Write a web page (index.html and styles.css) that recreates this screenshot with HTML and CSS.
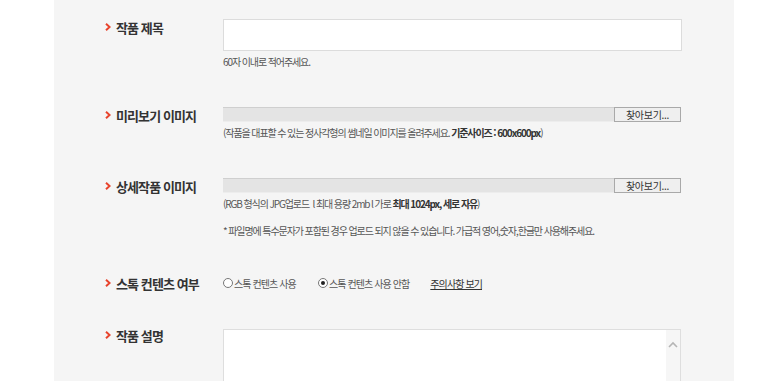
FILE: index.html
```html
<!DOCTYPE html>
<html lang="ko">
<head>
<meta charset="utf-8">
<link rel="stylesheet" href="styles.css">
</head>
<body>
<div class="panel">
  <div class="row r1">
    <div class="label"><svg class="chev" width="6" height="8" viewBox="0 0 6 8"><polyline points="1,0.8 4.6,4 1,7.2" fill="none" stroke="#e8432c" stroke-width="2"/></svg><span>작품 제목</span></div>
    <div class="field">
      <div class="textbox"></div>
      <p class="hint h-first">60자 이내로 적어주세요.</p>
    </div>
  </div>
  <div class="row r2">
    <div class="label"><svg class="chev" width="6" height="8" viewBox="0 0 6 8"><polyline points="1,0.8 4.6,4 1,7.2" fill="none" stroke="#e8432c" stroke-width="2"/></svg><span>미리보기 이미지</span></div>
    <div class="field">
      <div class="file"><div class="file-path"></div><div class="file-btn">찾아보기...</div></div>
      <p class="hint">(작품을 대표할 수 있는 정사각형의 썸네일 이미지를 올려주세요. <b>기준사이즈 : 600x600px</b>)</p>
    </div>
  </div>
  <div class="row r3">
    <div class="label"><svg class="chev" width="6" height="8" viewBox="0 0 6 8"><polyline points="1,0.8 4.6,4 1,7.2" fill="none" stroke="#e8432c" stroke-width="2"/></svg><span>상세작품 이미지</span></div>
    <div class="field">
      <div class="file"><div class="file-path"></div><div class="file-btn">찾아보기...</div></div>
      <p class="hint">(RGB 형식의 JPG업로드 &nbsp;l 최대 용량 2mb l 가로 <b>최대 1024px, 세로 자유</b>)</p>
      <p class="hint h-note">* 파일명에 특수문자가 포함된 경우 업로드 되지 않을 수 있습니다. 가급적 영어,숫자,한글만 사용해주세요.</p>
    </div>
  </div>
  <div class="row r4">
    <div class="label"><svg class="chev" width="6" height="8" viewBox="0 0 6 8"><polyline points="1,0.8 4.6,4 1,7.2" fill="none" stroke="#e8432c" stroke-width="2"/></svg><span>스톡 컨텐츠 여부</span></div>
    <div class="field radios">
      <label class="radio"><span class="dot"></span>스톡 컨텐츠 사용</label>
      <label class="radio on"><span class="dot"></span>스톡 컨텐츠 사용 안함</label>
      <a class="link">주의사항 보기</a>
    </div>
  </div>
  <div class="row r5">
    <div class="label"><svg class="chev" width="6" height="8" viewBox="0 0 6 8"><polyline points="1,0.8 4.6,4 1,7.2" fill="none" stroke="#e8432c" stroke-width="2"/></svg><span>작품 설명</span></div>
    <div class="field">
      <div class="area">
        <div class="area-body"></div>
        <div class="track"><svg width="14" height="10" viewBox="0 0 14 10"><polyline points="3,7 7,3 11,7" fill="none" stroke="#b5b5b5" stroke-width="1.6"/></svg></div>
      </div>
    </div>
  </div>
</div>
</body>
</html>
```

FILE: styles.css
```css
* { box-sizing: border-box; }
html, body { margin: 0; padding: 0; background: #fff; }
body {
  font-family: "Noto Sans CJK KR", "Noto Sans", sans-serif;
  color: #333;
  height: 381px;
  overflow: hidden;
}
.panel {
  margin-left: 54px;
  width: 680px;
  height: 381px;
  background: #f5f5f5;
  padding: 19px 0 0 51px;
}
.row {
  display: flex;
  align-items: flex-start;
}
.label {
  width: 118px;
  flex: none;
  display: flex;
  align-items: center;
  height: 16px;
  font-size: 13px;
  font-weight: 700;
  letter-spacing: -0.9px;
  color: #333;
  white-space: nowrap;
}
.chev { flex: none; margin-right: 5px; }
.field { width: 459px; flex: none; }
.textbox {
  height: 32px;
  background: #fff;
  border: 1px solid #dcdcdc;
}
.hint {
  margin: 4px 0 0;
  font-size: 10px;
  line-height: 14px;
  letter-spacing: -1.1px;
  color: #555;
  white-space: nowrap;
}
.hint b { font-weight: 700; color: #333; }
.hint.h-first { margin-top: 4px; }
.hint.h-note { margin-top: 13px; }
.r2 { margin-top: 38px; }
.r3 { margin-top: 38px; }
.r4 { margin-top: 37px; align-items: center; }
.r5 { margin-top: 38px; }
.r5 .label { margin-top: -2px; }
.file {
  display: flex;
  height: 15px;
  width: 458px;
}
.file-path {
  flex: 1;
  background: #e4e4e4;
  border-top: 1px solid #cfcfcf;
  border-bottom: 1px solid #ededed;
}
.file-btn {
  width: 67px;
  flex: none;
  border: 1px solid #a9a9a9;
  background: #efefef;
  font-size: 10px;
  line-height: 13px;
  text-align: center;
  color: #333;
  letter-spacing: -0.3px;
}
.radios {
  display: flex;
  align-items: center;
  height: 16px;
  font-size: 10px;
  letter-spacing: -0.9px;
  color: #555;
}
.radio {
  display: flex;
  align-items: center;
  white-space: nowrap;
}
.radio + .radio { margin-left: 22px; }
.dot {
  width: 10px;
  height: 10px;
  border: 1px solid #777;
  border-radius: 50%;
  background: #fff;
  margin-right: 1px;
  position: relative;
  flex: none;
}
.radio.on .dot::after {
  content: "";
  position: absolute;
  left: 2px;
  top: 2px;
  width: 4px;
  height: 4px;
  border-radius: 50%;
  background: #222;
}
.link {
  margin-left: 21px;
  color: #333;
  text-decoration: underline;
  white-space: nowrap;
}
.area {
  display: flex;
  height: 60px;
  width: 458px;
  border: 1px solid #dedede;
  border-bottom: none;
  background: #fff;
}
.area-body { flex: 1; }
.track {
  width: 14px;
  flex: none;
  background: #f6f6f6;
  padding-top: 10px;
}
.track svg { display: block; }
```
